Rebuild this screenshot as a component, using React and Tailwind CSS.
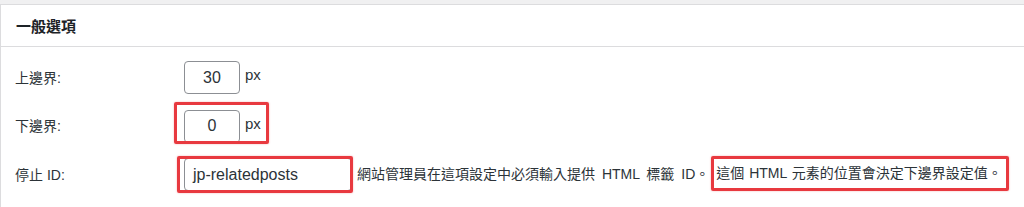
import React from "react";

const font = { fontFamily: '"Liberation Sans", "Noto Sans CJK TC", Arial, sans-serif' };

function Label({ children }) {
  return <div className="text-[14px] text-[#2c3338] leading-[20px]">{children}</div>;
}

export default function App() {
  return (
    <div style={font} className="w-[1024px] h-[207px] overflow-hidden bg-[#f0f0f1] pt-[4px]">
      <div className="h-full bg-white border-t border-l border-[#dcdcde]">
        <div className="h-[42px] border-b border-[#dcdcde] flex items-center pl-[15px] pt-[2px]">
          <h2 className="text-[15px] font-bold text-[#1d2327] leading-[20px]">一般選項</h2>
        </div>
        <div className="pt-[14px] pl-[14px] flex flex-col gap-[15.5px]">
          <div className="grid grid-cols-[169px_1fr] items-center h-[33px]">
            <Label>上邊界:</Label>
            <div className="flex items-center">
              <div className="w-[56px] h-[33px] border border-[#8c8f94] rounded-[4px] flex items-center justify-center text-[16px] text-[#2c3338]">
                30
              </div>
              <span className="ml-[5px] text-[15px] text-[#2c3338] -mt-[4px]">px</span>
            </div>
          </div>
          <div className="grid grid-cols-[169px_1fr] items-center h-[33px]">
            <Label>下邊界:</Label>
            <div className="flex items-center">
              <div className="relative flex items-center">
                <div className="w-[56px] h-[33px] border border-[#8c8f94] rounded-[4px] flex items-center justify-center text-[16px] text-[#2c3338]">
                  0
                </div>
                <span className="ml-[5px] text-[15px] text-[#2c3338] -mt-[4px]">px</span>
                <div className="absolute left-[-10px] top-[-8px] w-[95px] h-[42px] border-[3px] border-[#e8393f] rounded-[2px] shadow-[0_0_2px_rgba(232,57,63,0.4)]" />
              </div>
            </div>
          </div>
          <div className="grid grid-cols-[169px_1fr] items-center h-[33px]">
            <Label>停止 ID:</Label>
            <div className="flex items-center text-[14px] text-[#2c3338]">
              <div className="relative">
                <div className="w-[168px] h-[33px] border border-[#8c8f94] rounded-[4px] flex items-center pl-[8px] text-[16px] text-[#2c3338]">
                  jp-relatedposts
                </div>
                <div className="absolute left-[-7px] top-[-2px] w-[176px] h-[37px] border-[3px] border-[#e8393f] rounded-[2px] shadow-[0_0_2px_rgba(232,57,63,0.4)]" />
              </div>
              <span className="ml-[5px] whitespace-nowrap [word-spacing:3px]">網站管理員在這項設定中必須輸入提供 HTML 標籤 ID。</span>
              <span className="ml-[2px] -mt-[3px] inline-flex items-center h-[35px] border-[3px] border-[#e8393f] rounded-[2px] pl-[2px] pr-[4px] whitespace-nowrap [word-spacing:1px] shadow-[0_0_2px_rgba(232,57,63,0.4)]">
                這個 HTML 元素的位置會決定下邊界設定值。
              </span>
            </div>
          </div>
        </div>
      </div>
    </div>
  );
}
